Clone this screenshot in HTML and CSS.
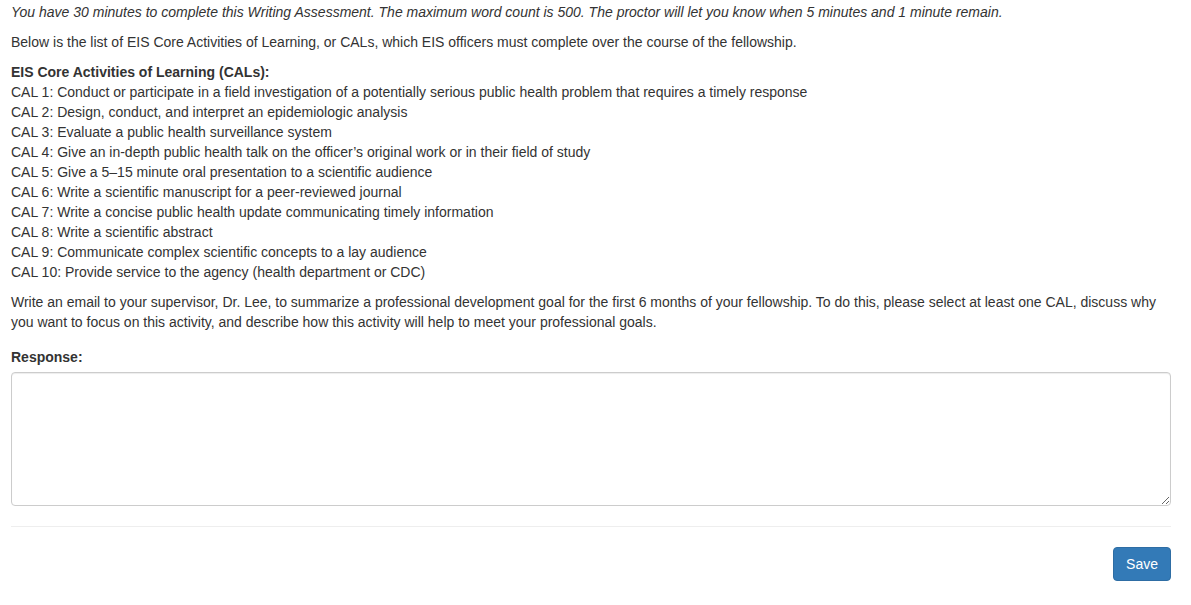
FILE: index.html
```html
<!DOCTYPE html>
<html>
<head>
    <title>Writing Assessment</title>
    <link rel="stylesheet" href="styles.css">
</head>
<body>
    <div class="container">
        <p class="notice">You have 30 minutes to complete this Writing Assessment. The maximum word count is 500. The proctor will let you know when 5 minutes and 1 minute remain.</p>
        <p>Below is the list of EIS Core Activities of Learning, or CALs, which EIS officers must complete over the course of the fellowship.</p>
        <p>
            <strong>EIS Core Activities of Learning (CALs):</strong><br>
            CAL 1: Conduct or participate in a field investigation of a potentially serious public health problem that requires a timely response<br>
            CAL 2: Design, conduct, and interpret an epidemiologic analysis<br>
            CAL 3: Evaluate a public health surveillance system<br>
            CAL 4: Give an in-depth public health talk on the officer’s original work or in their field of study<br>
            CAL 5: Give a 5–15 minute oral presentation to a scientific audience<br>
            CAL 6: Write a scientific manuscript for a peer-reviewed journal<br>
            CAL 7: Write a concise public health update communicating timely information<br>
            CAL 8: Write a scientific abstract<br>
            CAL 9: Communicate complex scientific concepts to a lay audience<br>
            CAL 10: Provide service to the agency (health department or CDC)
        </p>
        <p>Write an email to your supervisor, Dr. Lee, to summarize a professional development goal for the first 6 months of your fellowship. To do this, please select at least one CAL, discuss why you want to focus on this activity, and describe how this activity will help to meet your professional goals.</p>

        <div class="form-group">
            <label for="response">Response:</label>
            <textarea id="response" class="form-control"></textarea>
        </div>

        <hr>

        <div class="actions">
            <button class="btn btn-primary">Save</button>
        </div>
    </div>
</body>
</html>
```

FILE: styles.css
```css
body {
    font-family: "Liberation Sans", Arial, sans-serif;
    font-size: 14px;
    line-height: 20px;
    color: #333;
    margin: 0;
    background: #fff;
}
.container {
    padding: 2px 20px 0 11px;
}
p {
    margin: 0 0 10px;
}
.notice {
    font-style: italic;
}
strong {
    font-weight: bold;
}
.form-group {
    margin-top: 15px;
}
label {
    display: inline-block;
    font-weight: bold;
    margin-bottom: 5px;
}
.form-control {
    display: block;
    box-sizing: border-box;
    width: 100%;
    height: 134px;
    margin: 0;
    padding: 6px 12px;
    font-family: inherit;
    font-size: 14px;
    color: #555;
    border: 1px solid #ccc;
    border-radius: 4px;
    box-shadow: inset 0 1px 1px rgba(0,0,0,0.075);
    resize: vertical;
}
hr {
    margin: 20px 0;
    border: 0;
    border-top: 1px solid #eee;
}
.actions {
    display: flex;
    justify-content: flex-end;
}
.btn {
    font-family: inherit;
    font-size: 14px;
    line-height: 20px;
    padding: 6px 12px;
    border-radius: 4px;
    cursor: pointer;
}
.btn-primary {
    color: #fff;
    background: #337ab7;
    border: 1px solid #2e6da4;
}
```
